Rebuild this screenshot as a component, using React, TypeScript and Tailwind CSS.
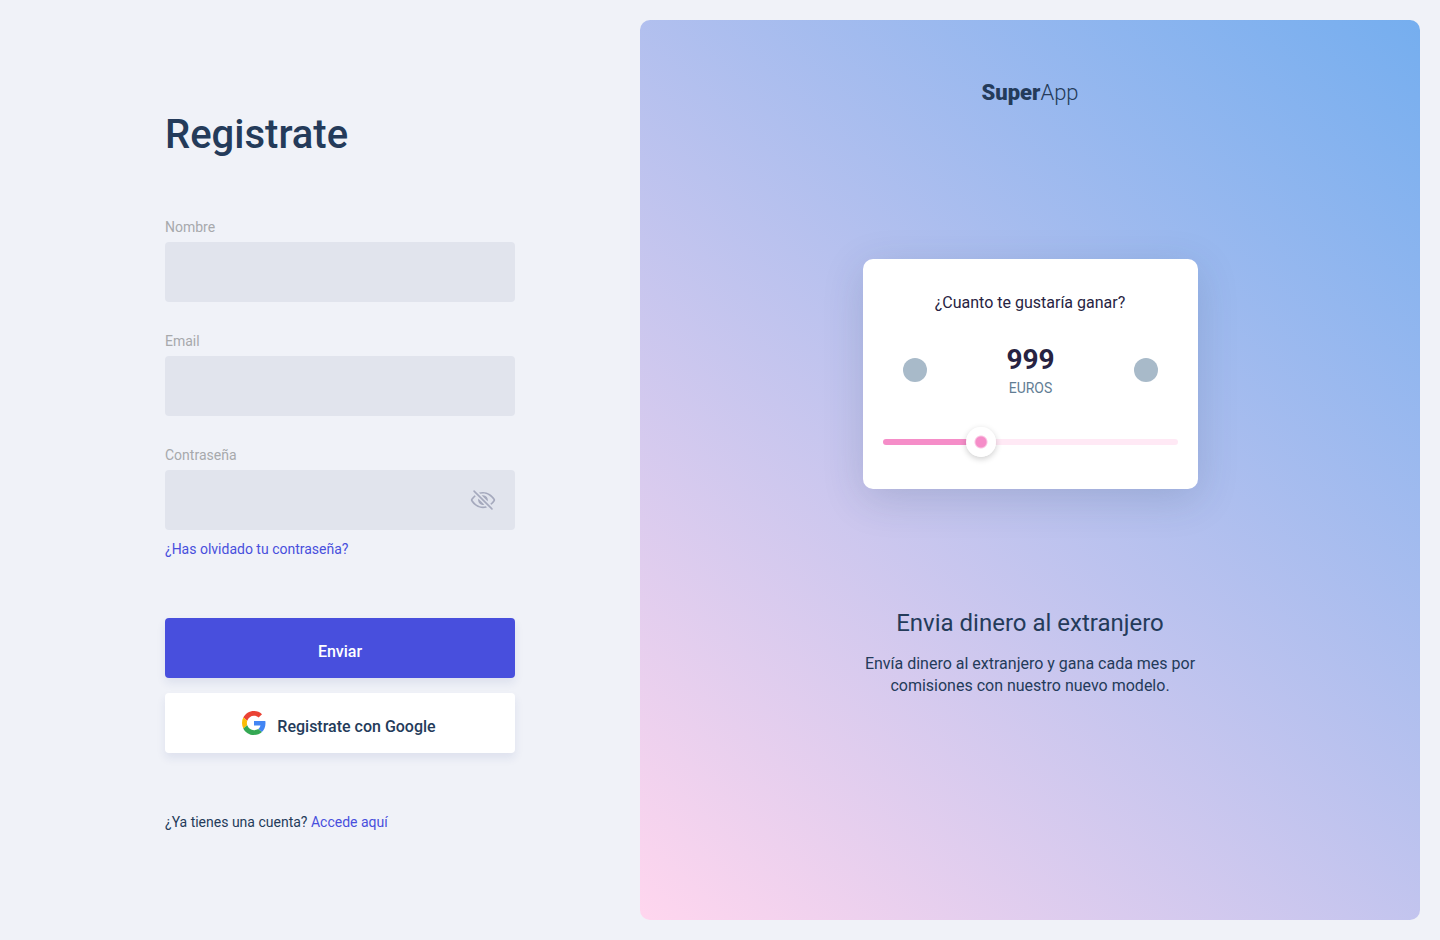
import { useState } from "react";
import type { ReactNode } from "react";
import { IoEyeOffOutline } from "react-icons/io5";

type FieldProps = {
  id: string;
  label: string;
  type: string;
  action?: ReactNode;
};

function Field({ id, label, type, action }: FieldProps) {
  return (
    <div>
      <label htmlFor={id} className="block pb-[5px] text-sm leading-5 text-[#a7a9ac]">
        {label}
      </label>
      <div className="flex h-15 items-center rounded bg-[#e1e4ed]">
        <input
          id={id}
          type={type}
          className="h-full min-w-0 flex-1 rounded bg-transparent px-4 text-base text-[#243b5a] outline-none"
        />
        {action}
      </div>
    </div>
  );
}

function GoogleLogo() {
  return (
    <svg viewBox="0 0 48 48" className="size-6" aria-hidden="true">
      <path fill="#EA4335" d="M24 9.5c3.54 0 6.71 1.22 9.21 3.6l6.85-6.85C35.9 2.38 30.47 0 24 0 14.62 0 6.51 5.38 2.56 13.22l7.98 6.19C12.43 13.72 17.74 9.5 24 9.5z" />
      <path fill="#4285F4" d="M46.98 24.55c0-1.57-.15-3.09-.38-4.55H24v9.02h12.94c-.58 2.96-2.26 5.48-4.78 7.18l7.73 6c4.51-4.18 7.09-10.36 7.09-17.65z" />
      <path fill="#FBBC05" d="M10.53 28.59c-.48-1.45-.76-2.99-.76-4.59s.27-3.14.76-4.59l-7.98-6.19C.92 16.46 0 20.12 0 24c0 3.88.92 7.54 2.56 10.78l7.97-6.19z" />
      <path fill="#34A853" d="M24 48c6.48 0 11.93-2.13 15.89-5.81l-7.73-6c-2.15 1.45-4.92 2.3-8.16 2.3-6.26 0-11.57-4.22-13.47-9.91l-7.98 6.19C6.51 42.62 14.62 48 24 48z" />
    </svg>
  );
}

function SignUpForm() {
  const [visible, setVisible] = useState(false);
  return (
    <main className="flex flex-col items-center justify-center px-4 pt-[2px]">
      <div className="w-full max-w-[350px]">
        <h1 className="text-[40px] leading-12 font-medium">Registrate</h1>
        <form className="pt-[58px]" onSubmit={(event) => event.preventDefault()}>
          <div className="flex flex-col gap-[29px]">
            <Field id="nombre" label="Nombre" type="text" />
            <Field id="email" label="Email" type="email" />
            <Field
              id="contrasena"
              label="Contraseña"
              type={visible ? "text" : "password"}
              action={
                <button
                  type="button"
                  aria-label="Mostrar contraseña"
                  onClick={() => setVisible(!visible)}
                  className="px-[19px] text-[#a5a9bd]"
                >
                  <IoEyeOffOutline className="size-[26px]" />
                </button>
              }
            />
          </div>
          <a href="#recuperar" className="mt-[9px] block text-sm leading-5 text-[#484fdd]">
            ¿Has olvidado tu contraseña?
          </a>
          <div className="flex flex-col gap-[15px] pt-[59px]">
            <button
              type="submit"
              className="h-15 rounded bg-[#484fdd] pt-2 text-base font-medium text-white shadow-[0_5px_10px_rgba(36,59,130,0.09)]"
            >
              Enviar
            </button>
            <button
              type="button"
              className="flex h-15 items-center justify-center gap-[11px] rounded bg-white pr-[2px] text-base font-medium shadow-[0_5px_10px_rgba(36,59,130,0.09)]"
            >
              <GoogleLogo />
              <span className="pt-2">Registrate con Google</span>
            </button>
          </div>
        </form>
        <p className="pt-[59px] text-sm leading-5">
          ¿Ya tienes una cuenta?{" "}
          <a href="#acceder" className="text-[#484fdd]">
            Accede aquí
          </a>
        </p>
      </div>
    </main>
  );
}

const MAX = 3160;
const STEP = 100;

function EarningsCard() {
  const [amount, setAmount] = useState(999);
  const percent = (amount / MAX) * 100;
  return (
    <section className="w-[335px] max-w-full rounded-[10px] bg-white px-5 pt-8 pb-8 text-center shadow-[0_10px_40px_rgba(36,59,90,0.17)]">
      <label htmlFor="ganancia" className="block text-base leading-6 text-[#272342]">
        ¿Cuanto te gustaría ganar?
      </label>
      <div className="flex items-center justify-between pt-7 pr-[19px] pl-5">
        <button
          type="button"
          aria-label="Menos"
          onClick={() => setAmount(Math.max(0, amount - STEP))}
          className="size-6 rounded-full bg-[#a8bac9]"
        />
        <div>
          <output htmlFor="ganancia" className="block text-[28px] leading-[34px] font-bold text-[#272342]">
            {amount}
          </output>
          <p className="pt-[2px] text-sm leading-[18px] text-[#627d94]">EUROS</p>
        </div>
        <button
          type="button"
          aria-label="Más"
          onClick={() => setAmount(Math.min(MAX, amount + STEP))}
          className="size-6 rounded-full bg-[#a8bac9]"
        />
      </div>
      <input
        id="ganancia"
        type="range"
        min={0}
        max={MAX}
        value={amount}
        onChange={(event) => setAmount(Number(event.target.value))}
        style={{
          backgroundImage: `linear-gradient(to right, #f58dc8 ${percent}%, #ffe9f5 ${percent}%)`,
        }}
        className="mt-[42px] mb-3 block h-[6px] w-full cursor-pointer appearance-none rounded-full [&::-webkit-slider-thumb]:size-[30px] [&::-webkit-slider-thumb]:appearance-none [&::-webkit-slider-thumb]:rounded-full [&::-webkit-slider-thumb]:bg-[radial-gradient(circle,#f58dc8_5px,#ffffff_7px)] [&::-webkit-slider-thumb]:shadow-[0_2px_6px_rgba(0,0,0,0.2)]"
      />
    </section>
  );
}

function Showcase() {
  return (
    <aside className="flex flex-col items-center rounded-[10px] bg-[linear-gradient(42deg,#ffd6ee,#75aeef)] px-5 py-15">
      <p className="pt-px text-[22px] leading-6">
        <span className="font-black">Super</span>
        <span className="font-light">App</span>
      </p>
      <div className="flex w-full flex-col items-center pt-[154px]">
        <EarningsCard />
        <div className="w-[350px] max-w-full pt-[118px] text-center">
          <h2 className="text-2xl leading-8">Envia dinero al extranjero</h2>
          <p className="pt-[14px] text-base leading-[22px]">
            Envía dinero al extranjero y gana cada mes por comisiones con nuestro nuevo modelo.
          </p>
        </div>
      </div>
    </aside>
  );
}

export default function App() {
  return (
    <div className="grid min-h-screen grid-cols-1 bg-[#f0f2f8] py-5 pr-5 pl-10 font-[Roboto,sans-serif] text-[#243b5a] md:grid-cols-[10fr_13fr]">
      <SignUpForm />
      <Showcase />
    </div>
  );
}
